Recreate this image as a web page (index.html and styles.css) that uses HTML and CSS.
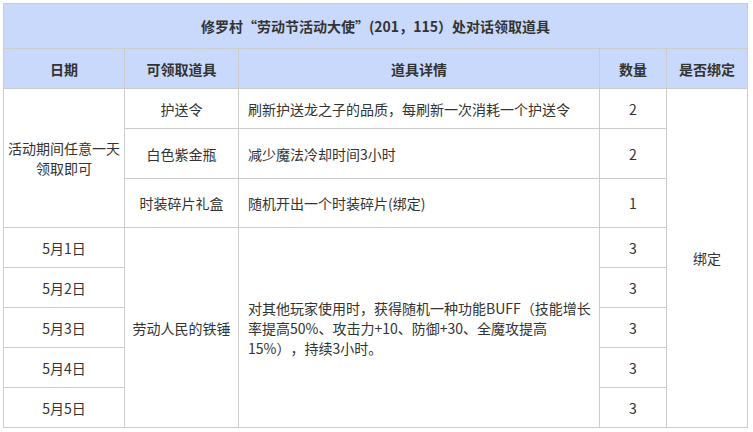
FILE: index.html
```html
<!DOCTYPE html>
<html lang="zh-CN">
<head>
<meta charset="utf-8">
<link rel="stylesheet" href="styles.css">
<title>劳动节活动</title>
</head>
<body>
<div class="wrap">
<table class="items">
  <colgroup>
    <col class="c-date">
    <col class="c-item">
    <col class="c-desc">
    <col class="c-num">
    <col class="c-bind">
  </colgroup>
  <thead>
    <tr class="r-title"><th colspan="5">修罗村“劳动节活动大使”(201，115）处对话领取道具</th></tr>
    <tr class="r-head"><th>日期</th><th>可领取道具</th><th>道具详情</th><th>数量</th><th>是否绑定</th></tr>
  </thead>
  <tbody>
    <tr class="r-40">
      <td rowspan="3">活动期间任意一天领取即可</td>
      <td>护送令</td>
      <td class="left">刷新护送龙之子的品质，每刷新一次消耗一个护送令</td>
      <td>2</td>
      <td rowspan="8">绑定</td>
    </tr>
    <tr class="r-50">
      <td>白色紫金瓶</td>
      <td class="left">减少魔法冷却时间3小时</td>
      <td>2</td>
    </tr>
    <tr class="r-49">
      <td>时装碎片礼盒</td>
      <td class="left">随机开出一个时装碎片(绑定)</td>
      <td>1</td>
    </tr>
    <tr class="r-40">
      <td>5月1日</td>
      <td rowspan="5">劳动人民的铁锤</td>
      <td rowspan="5" class="left">对其他玩家使用时，获得随机一种功能BUFF（技能增长率提高50%、攻击力+10、防御+30、全魔攻提高15%），持续3小时。</td>
      <td>3</td>
    </tr>
    <tr class="r-40"><td>5月2日</td><td>3</td></tr>
    <tr class="r-40"><td>5月3日</td><td>3</td></tr>
    <tr class="r-40"><td>5月4日</td><td>3</td></tr>
    <tr class="r-40"><td>5月5日</td><td>3</td></tr>
  </tbody>
</table>
</div>
</body>
</html>
```
FILE: styles.css
```css
html, body {
  margin: 0;
  padding: 0;
  background: #ffffff;
}
.wrap {
  padding: 3px;
}
.items {
  border-collapse: collapse;
  table-layout: fixed;
  width: 745px;
  font-family: "Noto Sans CJK SC", "Noto Sans", sans-serif;
  font-size: 14px;
  line-height: 20px;
  color: #333333;
  text-spacing-trim: space-all;
}
.c-date { width: 121px; }
.c-item { width: 114px; }
.c-desc { width: 361px; }
.c-num { width: 67px; }
.c-bind { width: 81px; }
.items th,
.items td {
  border: 1px solid #cccccc;
  padding: 0 3px;
  text-align: center;
  vertical-align: middle;
}
.items th {
  background: #c9d9fb;
  font-weight: bold;
}
.items td.left {
  text-align: left;
  padding-left: 9px;
  padding-right: 4px;
}
.r-title { height: 45px; }
.r-head { height: 40px; }
.r-40 { height: 40px; }
.r-50 { height: 50px; }
.r-49 { height: 49px; }
```
